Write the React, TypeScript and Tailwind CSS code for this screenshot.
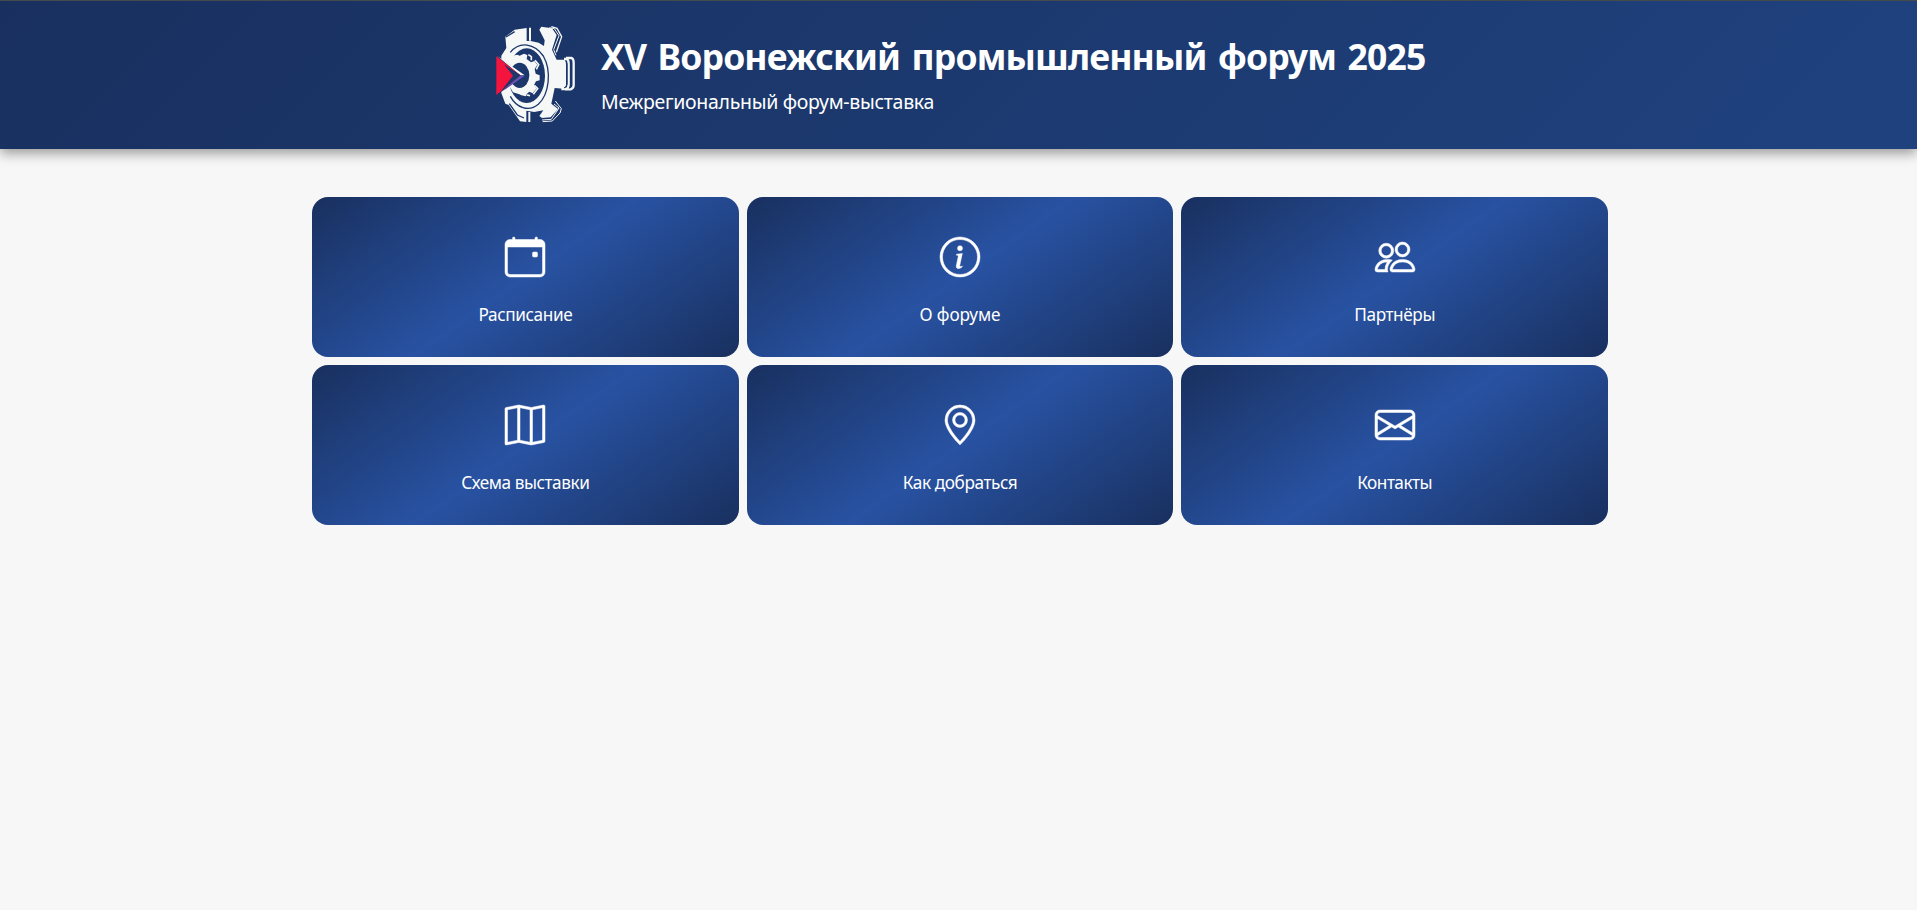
import { BsCalendarEvent, BsInfoCircle, BsPeople, BsMap, BsGeoAlt, BsEnvelope } from "react-icons/bs";

const tiles = [
  { label: "Расписание", Icon: BsCalendarEvent, tracking: "tracking-[-0.4px]" },
  { label: "О форуме", Icon: BsInfoCircle, tracking: "tracking-[-0.1px]" },
  { label: "Партнёры", Icon: BsPeople, tracking: "tracking-[-0.4px]" },
  { label: "Схема выставки", Icon: BsMap, tracking: "tracking-[-0.45px]" },
  { label: "Как добраться", Icon: BsGeoAlt, tracking: "tracking-[-0.42px]" },
  { label: "Контакты", Icon: BsEnvelope, tracking: "tracking-[-0.5px]" },
];

function Logo() {
  return (
    <svg viewBox="0 0 330 360" className="h-[120px] w-[110px] shrink-0">
      <g fill="#f6f7f7">
        <path d="M76 65L104 44L140 39V78H152L176 83L192 93L194 76L178 44L184 35L216 40L230 60L216 104L230 134H252Q258 135 258 150V208Q258 219 250 221L224 219L214 266L234 282L212 307L186 309L178 303L190 286L163 291L139 287V321L120 319L86 270L76 266L64 234L64 122L79 99Z" />
        <path d="M147 38H153V77H147ZM145 291H151V321H145Z" />
      </g>
      <g fill="none" stroke="#f6f7f7">
        <path d="M208 38L223 41L237 62L221 104L228 121" strokeWidth="3" />
        <path d="M214 35L231 40L245 65L229 112" strokeWidth="4" />
        <path d="M222 267L237 279L214 313L186 315" strokeWidth="3" />
        <path d="M226 258L244 281L240 294L217 318L188 320" strokeWidth="3" />
        <path d="M252 132H260Q266 134 266 147V207Q266 219 258 222H244" strokeWidth="7" />
        <path d="M258 129H275Q281 132 281 143V211Q281 220 272 223H256" strokeWidth="7" />
      </g>
      <g fill="none" stroke="#1b376c">
        <path d="M91 112C119 77 164 85 190 123C216 169 207 239 175 268C146 292 109 278 91 244" strokeWidth="4" />
        <path d="M258 139Q261 143 261 151V207Q260 216 252 219M273 138V211Q273 217 268 219" strokeWidth="3" />
        <path d="M78 66L104 50M88 266L112 300L132 309" strokeWidth="4" />
      </g>
      <ellipse cx="140" cy="182" rx="55" ry="82" fill="#1b376c" />
      <path d="M94 123L112 119L119 122L132 116L142 120L140 132L153 142L163 138L172 149L164 162L167 176L179 181V196L168 199L162 210L169 221L158 235L148 230L141 236L138 244L124 241L118 238L99 232L91 218L84 214V147Z" fill="#f6f7f7" />
      <path d="M145 119L154 125V136M165 136L176 149L169 163M163 211L173 221L160 238M141 240L150 242" fill="none" stroke="#f6f7f7" strokeWidth="5" />
      <ellipse cx="119" cy="181" rx="29" ry="38" fill="#1b376c" />
      <path d="M49 122L134 181L49 241Z" fill="#1b376c" />
      <path d="M51 122L134 181H120Z" fill="#fff" />
      <path d="M110 182H134L72 226Z" fill="#6654bb" />
      <path d="M49 124L122 181L49 240Z" fill="#f4143d" />
      <path d="M72 148L122 181L64 227L99 182Z" fill="#1b376c" />
    </svg>
  );
}

export default function App() {
  return (
    <div className="min-h-screen overflow-hidden bg-[#f7f7f7] font-['Noto_Sans',sans-serif] text-white">
      <header className="flex h-[149px] w-full border-t border-[#454a4a] bg-linear-[135deg,#19305f,#1f427f] pt-[14px] pl-[480px] shadow-[0_4px_12px_rgba(0,0,0,0.4)]">
        <Logo />
        <div className="pt-[17px] pl-[11px] whitespace-nowrap">
          <h1 className="text-[35.5px] leading-[48px] font-bold tracking-[-0.84px] [word-spacing:3px]">XV Воронежский промышленный форум 2025</h1>
          <p className="mt-[7px] text-[19.5px] leading-[30px] tracking-[-0.3px]">Межрегиональный форум-выставка</p>
        </div>
      </header>
      <main className="ml-[312px] grid w-[1296px] grid-cols-3 gap-2 pt-12">
        {tiles.map(({ label, Icon, tracking }) => (
          <a key={label} className="flex h-40 flex-col items-center rounded-2xl bg-linear-[145deg,#19305f,#2852a2_50%,#19305f] pt-10">
            <Icon className="size-10 overflow-visible stroke-current [stroke-width:0.2px]" />
            <span className={`mt-[26px] text-[17.2px] leading-6 whitespace-nowrap ${tracking}`}>{label}</span>
          </a>
        ))}
      </main>
    </div>
  );
}
